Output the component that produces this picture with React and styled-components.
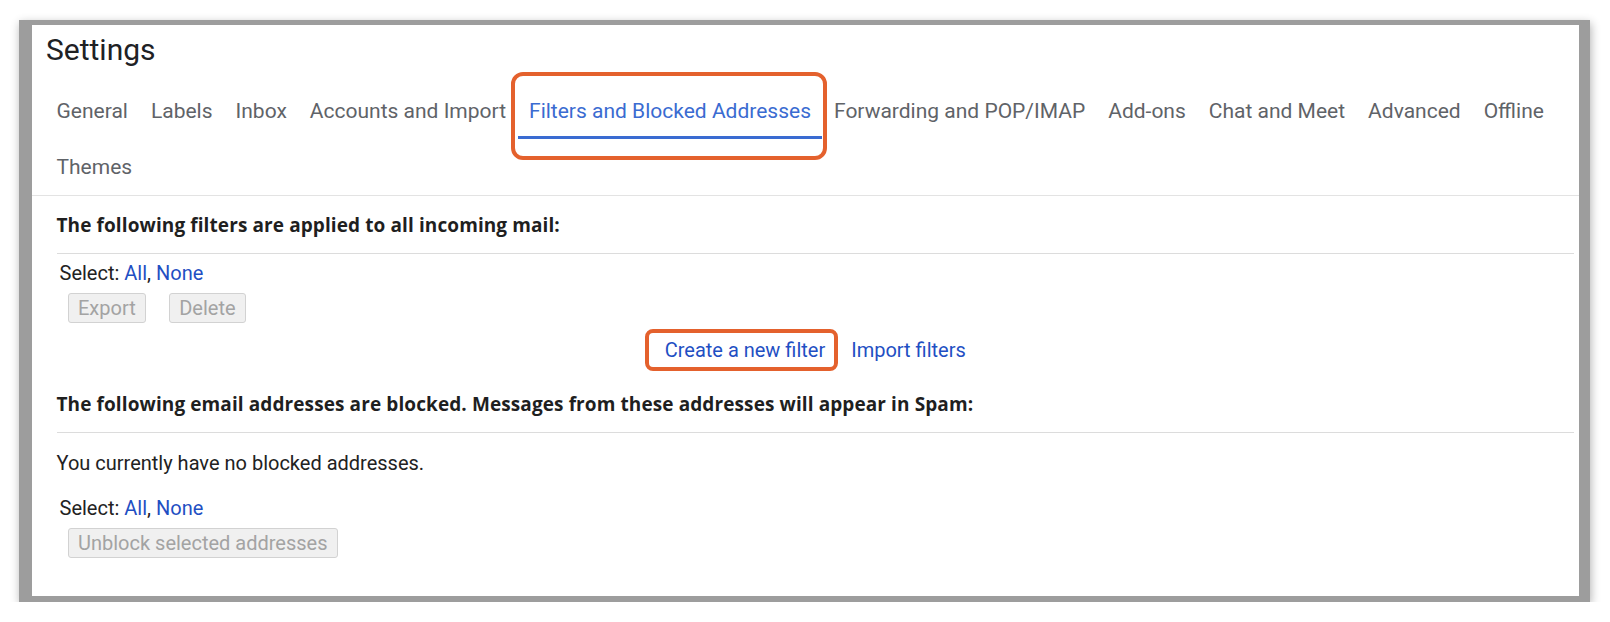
import React from "react";
import styled, { createGlobalStyle } from "styled-components";

const Global = createGlobalStyle`
  html, body { margin: 0; padding: 0; background: #ffffff; }
  body { font-family: Roboto, "Liberation Sans", Arial, sans-serif; }
  * { box-sizing: border-box; }
`;

const Frame = styled.div`
  margin: 20px 0 0 19px;
  width: 1571px;
  border-style: solid;
  border-color: #9d9d9d;
  border-width: 5px 11px 6px 13px;
  box-shadow: 1px 3px 9px rgba(0, 0, 0, 0.3);
`;

const Panel = styled.div`
  background: #ffffff;
  height: 571px;
  display: flex;
  flex-direction: column;
`;

const Header = styled.header`
  padding: 8px 0 16px 14px;
`;

const Title = styled.h1`
  margin: 0;
  font-family: Roboto, sans-serif;
  font-weight: 400;
  font-size: 30px;
  line-height: 34px;
  color: #202124;
`;

const TabBar = styled.nav`
  display: flex;
  flex-wrap: wrap;
  padding-left: 13px;
  border-bottom: 1px solid #e3e3e3;
`;

const Tab = styled.div`
  position: relative;
  height: 56px;
  padding: 3px 11.5px 0;
  display: flex;
  align-items: center;
  font-family: Roboto, sans-serif;
  font-size: 21px;
  color: ${(p) => (p.$active ? "#3a6bd1" : "#5f6368")};
  border-bottom: 3px solid ${(p) => (p.$active ? "#3a6bd1" : "transparent")};
  white-space: nowrap;
`;

const Callout = styled.span`
  position: absolute;
  top: ${(p) => p.$t}px;
  left: ${(p) => p.$l}px;
  right: ${(p) => p.$r}px;
  bottom: ${(p) => p.$b}px;
  border: 4px solid #e4612d;
  border-radius: ${(p) => p.$radius}px;
  pointer-events: none;
`;

const Body = styled.div`
  padding: 0 5px 0 24.5px;
`;

const SectionHeading = styled.h2`
  margin: 0;
  padding: ${(p) => p.$pt}px 0 16px;
  font-family: "Open Sans", sans-serif;
  font-weight: 700;
  font-size: 19px;
  letter-spacing: 0.1px;
  line-height: 24px;
  color: #1f1f1f;
  border-bottom: 1px solid #dcdcdc;
`;

const SelectRow = styled.div`
  padding: ${(p) => p.$pt}px 0 0 3px;
  font-size: 20px;
  line-height: 22px;
  color: #222222;
`;

const Link = styled.a`
  position: relative;
  color: #1f4fc3;
  text-decoration: none;
  cursor: pointer;
`;

const ButtonRow = styled.div`
  display: flex;
  gap: 23.5px;
  padding: 9px 0 0 11.5px;
`;

const Button = styled.button`
  height: 30px;
  padding: 0 9px;
  font-family: Roboto, sans-serif;
  font-size: 20px;
  color: #a3a3a3;
  background: #f0f0f0;
  border: 1px solid #d2d2d2;
  border-radius: 3px;
`;

const LinkRow = styled.div`
  display: flex;
  justify-content: center;
  gap: 26px;
  padding: 16px 0 0;
  font-size: 20px;
  line-height: 22px;
`;

const Note = styled.p`
  margin: 0;
  padding: 19px 0 0;
  font-size: 20px;
  line-height: 22px;
  color: #222222;
`;

const tabs = [
  "General",
  "Labels",
  "Inbox",
  "Accounts and Import",
  "Filters and Blocked Addresses",
  "Forwarding and POP/IMAP",
  "Add-ons",
  "Chat and Meet",
  "Advanced",
  "Offline",
  "Themes",
];

export default function App() {
  return (
    <>
      <Global />
      <Frame>
        <Panel>
          <Header>
            <Title>Settings</Title>
          </Header>
          <TabBar>
            {tabs.map((t) => {
              const active = t === "Filters and Blocked Addresses";
              return (
                <Tab key={t} $active={active}>
                  {t}
                  {active && <Callout $t={-11} $l={-7} $r={-5} $b={-24} $radius={12} />}
                </Tab>
              );
            })}
          </TabBar>
          <Body>
            <SectionHeading $pt={17}>The following filters are applied to all incoming mail:</SectionHeading>
            <SelectRow $pt={8}>
              Select: <Link>All</Link>, <Link>None</Link>
            </SelectRow>
            <ButtonRow>
              <Button disabled>Export</Button>
              <Button disabled>Delete</Button>
            </ButtonRow>
            <LinkRow>
              <Link>
                Create a new filter
                <Callout $t={-10} $l={-20} $r={-13} $b={-10} $radius={8} />
              </Link>
              <Link>Import filters</Link>
            </LinkRow>
            <SectionHeading $pt={31}>
              The following email addresses are blocked. Messages from these addresses will appear in Spam:
            </SectionHeading>
            <Note>You currently have no blocked addresses.</Note>
            <SelectRow $pt={23}>
              Select: <Link>All</Link>, <Link>None</Link>
            </SelectRow>
            <ButtonRow>
              <Button disabled>Unblock selected addresses</Button>
            </ButtonRow>
          </Body>
        </Panel>
      </Frame>
    </>
  );
}
